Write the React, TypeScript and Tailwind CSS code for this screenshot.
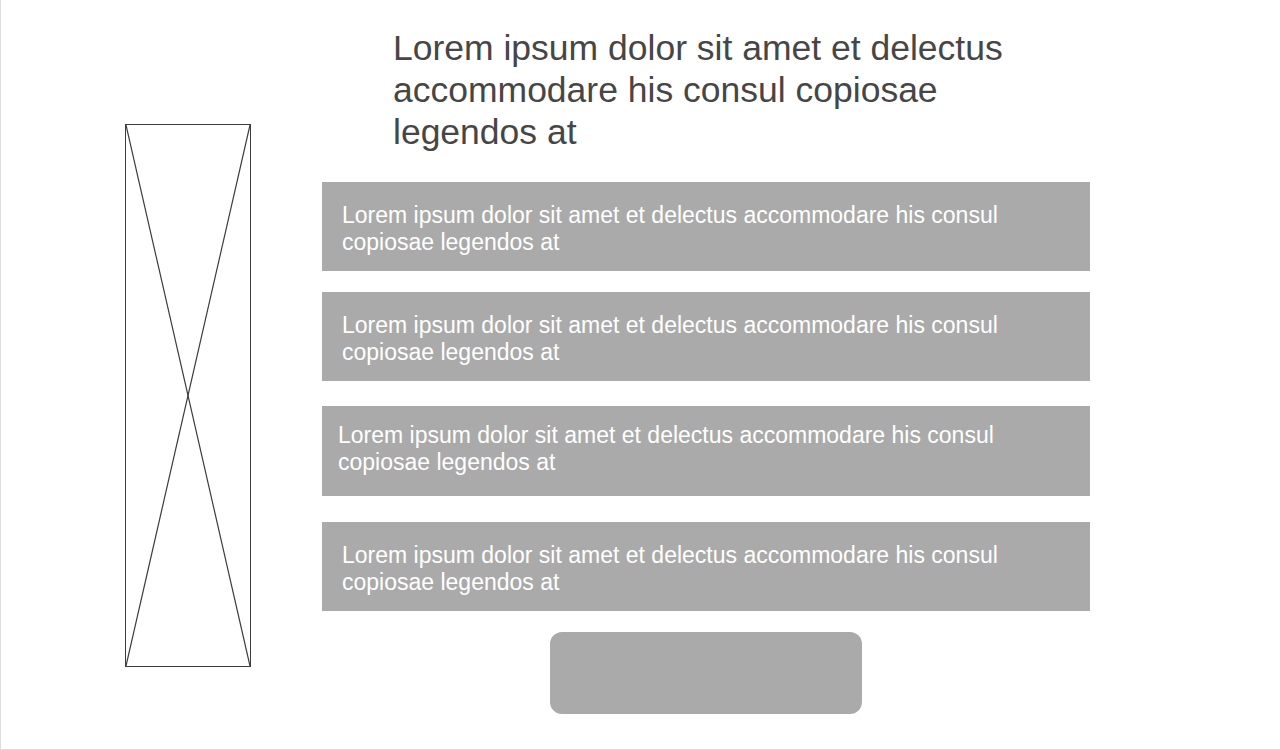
const ITEM = 'Lorem ipsum dolor sit amet et delectus accommodare his consul copiosae legendos at';

const rows = [
  { mt: 'mt-[29px]', pl: 'pl-[20px]', pt: 'pt-[20px]', h: 'h-[89px]' },
  { mt: 'mt-[21px]', pl: 'pl-[20px]', pt: 'pt-[20px]', h: 'h-[89px]' },
  { mt: 'mt-[25px]', pl: 'pl-[16px]', pt: 'pt-[16px]', h: 'h-[90px]' },
  { mt: 'mt-[26px]', pl: 'pl-[20px]', pt: 'pt-[20px]', h: 'h-[89px]' },
];

function Placeholder() {
  return (
    <div className="relative w-[126px] h-[543px] border border-[#3c3c3c] shrink-0">
      <svg className="absolute inset-0 w-full h-full" viewBox="0 0 124 541" preserveAspectRatio="none">
        <line x1="0" y1="0" x2="124" y2="541" stroke="#3c3c3c" strokeWidth="1.2" vectorEffect="non-scaling-stroke" />
        <line x1="124" y1="0" x2="0" y2="541" stroke="#3c3c3c" strokeWidth="1.2" vectorEffect="non-scaling-stroke" />
      </svg>
    </div>
  );
}

export default function App() {
  return (
    <div
      className="w-[1280px] h-[750px] bg-white border-l border-b border-[#dcdcdc] flex overflow-hidden"
      style={{ fontFamily: '"Liberation Sans", Arial, sans-serif' }}
    >
      <div className="ml-[124px] mt-[124px]">
        <Placeholder />
      </div>

      <div className="ml-[71px] w-[768px] flex flex-col">
        <h1 className="mt-[27px] pl-[71px] pr-[57px] text-[35.5px] leading-[42px] text-[#464646] font-normal">
          {ITEM}
        </h1>

        {rows.map((r, i) => (
          <div key={i} className={`${r.mt} ${r.pl} ${r.pt} ${r.h} pr-[80px] bg-[#aaaaaa] text-white text-[23px] leading-[27px]`}>
            {ITEM}
          </div>
        ))}

        <button type="button" className="mt-[21px] self-center w-[312px] h-[82px] rounded-[12px] bg-[#aaaaaa]" />
      </div>
    </div>
  );
}
